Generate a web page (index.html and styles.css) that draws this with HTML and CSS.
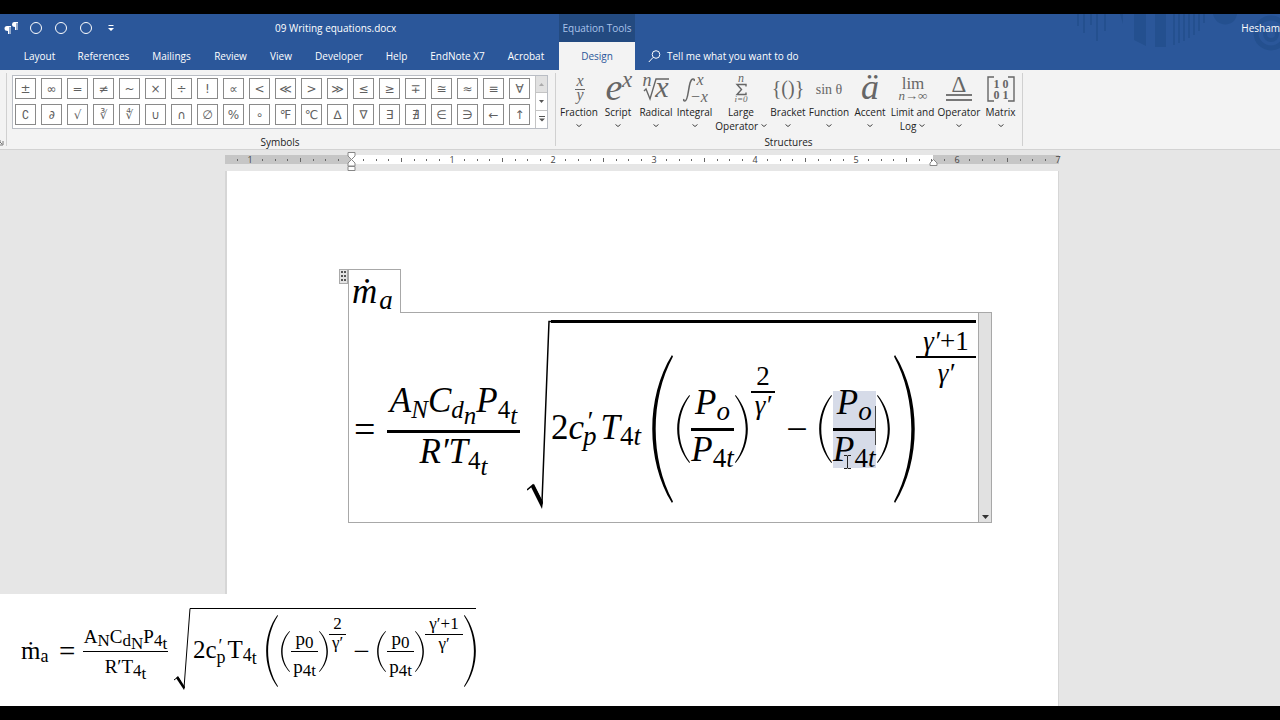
FILE: index.html
```html
<!DOCTYPE html>
<html lang="en">
<head>
<meta charset="utf-8">
<title>09 Writing equations.docx</title>
<link rel="stylesheet" href="styles.css">
</head>
<body>
<svg class="defs" aria-hidden="true">
  <symbol id="paren" viewBox="0 0 20 148" preserveAspectRatio="none"><path d="M19 0C-6 42-6 106 19 148L20 146.500C-2 104-2 44 20 1.500Z"/></symbol>
  <symbol id="chev" viewBox="0 0 6 4"><path d="M.500.500l2.500 2 2.500-2" fill="none" stroke="#444"/></symbol>
</svg>
<header class="app-head">
  <svg class="art" viewBox="0 0 204 56" aria-hidden="true">
    <g stroke="#24508f" fill="none">
      <path stroke-width="2" d="M2 0v12M8 0v19M15 0v11M21 0v27M29 0v17"/>
      <path stroke-width="2" d="M98 0v31M103 0v29M108 0v27M113 0v24M118 0v21M123 0v17M128 0v9"/>
      <circle cx="195" cy="19" r="15" stroke-width="5"/>
      <circle cx="195" cy="20" r="6" stroke-width="4"/>
    </g>
    <path fill="#24508f" d="M44 0h3v10zM58 0h12v32l-12-6zM79 0h11v33H79zM137 0h24c-2 14-21 14-24 0z"/>
  </svg>
  <div class="titlebar">
    <div class="quick">
      <button aria-label="Paragraph marks"><svg width="14" height="12" viewBox="0 0 14 12"><path fill="#fff" d="M3 4h4v1h-.500v7H5.500V5H5v7H4V9Q.500 9 .500 6.500T3 4zM10 0h4v1h-.500v7h-1V1H12v7h-1V5Q8 5 8 2.500T10 0z"/></svg></button>
      <button aria-label="Shape 1"><i class="ring"></i></button>
      <button aria-label="Shape 2"><i class="ring"></i></button>
      <button aria-label="Shape 3"><i class="ring"></i></button>
      <button aria-label="Customize"><svg width="6" height="7" viewBox="0 0 6 7"><path fill="#fff" d="M.5 0h5v1h-5zM0 3h6L3 6z"/></svg></button>
    </div>
    <h1>09 Writing equations.docx</h1>
    <div class="context">Equation Tools</div>
    <div class="user">Hesham</div>
  </div>
  <nav class="tabs">
    <button>Layout</button><button>References</button><button>Mailings</button><button>Review</button><button>View</button><button>Developer</button><button>Help</button><button>EndNote X7</button><button class="last">Acrobat</button><button class="active">Design</button>
    <button class="tell"><svg width="13" height="13" viewBox="0 0 13 13" fill="none" stroke="#fff"><circle cx="8" cy="4.500" r="3.800"/><path d="M5 7.500L.800 12"/></svg>Tell me what you want to do</button>
  </nav>
</header>
<section class="ribbon">
  <div class="edge"><svg width="4" height="6" viewBox="0 0 4 6"><path d="M0 1h1M3 1v4H0M0 2l2 2" fill="none" stroke="#777"/></svg></div>
  <div class="group symbols">
    <div class="gallery">
      <div class="cells">
        <button>±</button><button>∞</button><button>=</button><button>≠</button><button>~</button><button>×</button><button>÷</button><button>!</button><button>∝</button><button>&lt;</button><button>≪</button><button>&gt;</button><button>≫</button><button>≤</button><button>≥</button><button>∓</button><button>≅</button><button>≈</button><button>≡</button><button>∀</button>
        <button>∁</button><button>∂</button><button>√</button><button>∛</button><button>∜</button><button>∪</button><button>∩</button><button>∅</button><button>%</button><button>∘</button><button>℉</button><button>℃</button><button>∆</button><button>∇</button><button>∃</button><button>∄</button><button>∈</button><button>∋</button><button>←</button><button>↑</button>
      </div>
      <div class="spin">
        <button class="off" aria-label="Scroll up"><svg width="5" height="3"><path d="M0 3l2.500-3L5 3z" fill="#aaa"/></svg></button>
        <button aria-label="Scroll down"><svg width="5" height="3"><path d="M0 0l2.500 3L5 0z" fill="#555"/></svg></button>
        <button aria-label="More symbols"><svg width="6" height="6"><path d="M0 0h6v1H0zM0 2.500h6l-3 3z" fill="#555"/></svg></button>
      </div>
    </div>
    <h2>Symbols</h2>
  </div>
  <div class="group structures">
    <div class="tools">
      <button><svg class="ico" viewBox="0 0 28 28"><text class="it" x="15" y="10" font-size="16">x</text><path d="M10 13.500h10" stroke="#666"/><text class="it" x="15" y="24" font-size="16">y</text></svg><span>Fraction</span><svg class="chev"><use href="#chev"/></svg></button>
      <button><svg class="ico" viewBox="0 0 28 28"><text class="it" x="10" y="24" font-size="38">e</text><text class="it" x="23" y="11" font-size="23">x</text></svg><span>Script</span><svg class="chev"><use href="#chev"/></svg></button>
      <button><svg class="ico" viewBox="0 0 28 28"><text class="it" x="5" y="10" font-size="18">n</text><text class="it" x="20" y="21" font-size="30">x</text><path d="M2 15l2-2 4 10L14 3h13" fill="none" stroke="#666" stroke-width="1.400"/></svg><span>Radical</span><svg class="chev"><use href="#chev"/></svg></button>
      <button><svg class="ico" viewBox="0 0 28 28"><path d="M3 23q-1 2 1 2c4 0 3-22 8-22q2 0 1 2" fill="none" stroke="#666" stroke-width="1.500"/><text class="it" x="19" y="9" font-size="16">x</text><text class="it" x="18" y="26" font-size="16">−x</text></svg><span>Integral</span><svg class="chev"><use href="#chev"/></svg></button>
      <button><svg class="ico" viewBox="0 0 28 28"><text class="it" x="14" y="6" font-size="12">n</text><path d="M19 10.500V8.500H10l4.500 5L10 18.500h9v-2" fill="none" stroke="#666" stroke-width="1.400"/><text class="it" x="14" y="26" font-size="9">i=0</text></svg><span>Large<br>Operator <svg class="chev in"><use href="#chev"/></svg></span></button>
      <button><svg class="ico" viewBox="0 0 28 28"><text x="14" y="19" font-size="20">{()}</text></svg><span>Bracket</span><svg class="chev"><use href="#chev"/></svg></button>
      <button><svg class="ico" viewBox="0 0 28 28"><text x="14" y="18" font-size="14">sin θ</text></svg><span>Function</span><svg class="chev"><use href="#chev"/></svg></button>
      <button><svg class="ico" viewBox="0 0 28 28"><text class="it" x="14" y="23" font-size="36">ä</text></svg><span>Accent</span><svg class="chev"><use href="#chev"/></svg></button>
      <button><svg class="ico" viewBox="0 0 28 28"><text x="14" y="13" font-size="17">lim</text><text class="it" x="14" y="24" font-size="13">n→∞</text></svg><span>Limit and<br>Log <svg class="chev in"><use href="#chev"/></svg></span></button>
      <button><svg class="ico" viewBox="0 0 28 28"><text x="14" y="16" font-size="23">Δ</text><path d="M1 19h26M1 24h26" stroke="#777" stroke-width="2"/></svg><span>Operator</span><svg class="chev"><use href="#chev"/></svg></button>
      <button><svg class="ico" viewBox="0 0 28 28"><g font-weight="700"><text x="14" y="12" font-size="12">1 0</text><text x="14" y="23" font-size="12">0 1</text></g><path d="M7 1H1v24h6M21 1h6v24h-6" fill="none" stroke="#666" stroke-width="1.400"/></svg><span>Matrix</span><svg class="chev"><use href="#chev"/></svg></button>
    </div>
    <h2>Structures</h2>
  </div>
</section>
<main class="workspace">
  <svg class="ruler" width="834" height="18" viewBox="0 0 834 18">
    <defs>
      <pattern id="ticks" x="126" y="0" width="101" height="10" patternUnits="userSpaceOnUse"><path fill="#666" d="M12 4h1v2h-1zM25 4h1v2h-1zM37 4h1v2h-1zM50 3h1v4h-1zM63 4h1v2h-1zM75 4h1v2h-1zM88 4h1v2h-1z"/></pattern>
    </defs>
    <path fill="#c6c6c6" d="M0 0h834v9H0z"/><path fill="#fff" d="M126 0h582v9H126z"/>
    <path fill="url(#ticks)" d="M0 0h834v9H0z"/>
    <g class="nums"><text x="25" y="8">1</text><text x="227" y="8">1</text><text x="328" y="8">2</text><text x="429" y="8">3</text><text x="530" y="8">4</text><text x="631" y="8">5</text><text x="732" y="8">6</text><text x="833" y="8">7</text></g>
    <path fill="#fff" stroke="#888" d="M123-2.500h7V1l-3.500 3.500L123 1zM126.500 4.500L130 8v3h-7V8zM123 11.500h7v4h-7zM708.500 4.500L712 8v2.500h-7V8z"/>
  </svg>
  <article class="page">
    <div class="equation">
      <button class="handle" aria-label="Move equation"><svg width="5" height="11"><path fill="#555" d="M0 0h2v2H0zM3 0h2v2H3zM0 4h2v2H0zM3 4h2v2H3zM0 8h2v2H0zM3 8h2v2H3z"/></svg></button>
      <div class="lead math"><span>ṁ<sub>a</sub></span></div>
      <div class="body">
        <div class="math row">
          <div class="line">
            <span class="eq">=</span>
            <span class="frac wide"><span class="num"><span>A<sub>N</sub>C<sub>d<sub>n</sub></sub>P<sub class="up">4<sub>t</sub></sub></span></span><span class="den"><span>R′T<sub class="up">4<sub>t</sub></sub></span></span></span>
          </div>
          <svg class="rad" viewBox="0 0 24 189"><path d="M0 170l6-5 9 17L22 1.500h2" fill="none" stroke="#000" stroke-width="1.500"/><path d="M4 167l3-3 9 18-1 7z"/></svg>
          <div class="radicand">
            <div class="line">
              <span class="term"><b class="up">2</b>c<sup>′</sup><sub class="under">p</sub>T<sub class="up">4</sub><sub>t</sub></span>
              <svg class="paren tall"><use href="#paren"/></svg>
              <svg class="paren"><use href="#paren"/></svg>
              <span class="frac"><span class="num"><span>P<sub>o</sub></span></span><span class="den"><span>P<sub class="up">4</sub><sub>t</sub></span></span></span>
              <svg class="paren close"><use href="#paren"/></svg>
              <span class="frac exp"><span class="num up">2</span><span class="den">γ′</span></span>
              <span class="minus">−</span>
              <svg class="paren"><use href="#paren"/></svg>
              <span class="frac picked"><span class="num"><span>P<sub>o</sub></span></span><span class="den"><span>P<sub class="up">4</sub><sub>t</sub></span></span>
                <svg class="ibeam" width="7" height="14" viewBox="0 0 7 14"><path d="M0 .500h3l.500 1 .500-1h3M3.500 1v12M0 13.500h3l.500-1 .500 1h3" fill="none" stroke="#222"/></svg></span>
              <svg class="paren close"><use href="#paren"/></svg>
              <svg class="paren tall close"><use href="#paren"/></svg>
              <span class="frac exp top"><span class="num">γ′<b class="up">+1</b></span><span class="den">γ′</span></span>
            </div>
          </div>
        </div>
        <button class="drop" aria-label="Equation options"><svg width="7" height="4"><path d="M0 0h7L3.500 4z" fill="#333"/></svg></button>
      </div>
    </div>
  </article>
  <aside class="sample">
    <div class="math small row">
      <div class="line">
        <span class="mdot">ṁ<sub>a</sub></span>
        <span class="eq">=</span>
        <span class="frac wide"><span class="num"><span>A<sub>N</sub>C<sub>d<sub>N</sub></sub>P<sub>4<sub>t</sub></sub></span></span><span class="den"><span>R′T<sub>4<sub>t</sub></sub></span></span></span>
      </div>
      <svg class="rad" viewBox="0 0 18 82"><path d="M0 72l4-3 6 11L16 .500h2" fill="none" stroke="#000"/><path d="M2 70l2-2 7 11-1 3z"/></svg>
      <div class="radicand">
        <div class="line">
          <span class="term">2c<sup>′</sup><sub class="under">p</sub>T<sub>4<sub>t</sub></sub></span>
          <svg class="paren tall"><use href="#paren"/></svg>
          <svg class="paren"><use href="#paren"/></svg>
          <span class="frac"><span class="num"><span>p<sub>0</sub></span></span><span class="den"><span>p<sub>4t</sub></span></span></span>
          <svg class="paren close"><use href="#paren"/></svg>
          <span class="frac exp"><span class="num">2</span><span class="den">γ′</span></span>
          <span class="minus">−</span>
          <svg class="paren"><use href="#paren"/></svg>
          <span class="frac"><span class="num"><span>p<sub>0</sub></span></span><span class="den"><span>p<sub>4t</sub></span></span></span>
          <svg class="paren close"><use href="#paren"/></svg>
          <span class="frac exp top"><span class="num">γ′+1</span><span class="den">γ′</span></span>
          <svg class="paren tall close"><use href="#paren"/></svg>
        </div>
      </div>
    </div>
  </aside>
</main>
</body>
</html>
```
FILE: styles.css
```css
* { box-sizing: border-box; }
body {
  margin: 0;
  min-height: 100vh;
  display: flex;
  flex-direction: column;
  border-top: 14px solid #000;
  border-bottom: 14px solid #000;
  background: #e6e6e6;
  font: 10px/14px "Open Sans", "Noto Sans", sans-serif;
  color: #222;
  overflow-x: hidden;
}
button { font: inherit; color: inherit; background: none; border: 0; padding: 0; }
h1, h2 { margin: 0; font-size: 10px; font-weight: 400; }
.defs { position: absolute; width: 0; height: 0; }

/* Title bar and tabs */
.app-head { position: relative; background: #2b579a; color: #fff; }
.art { position: absolute; right: 0; top: 0; width: 204px; height: 56px; }
.titlebar { display: flex; height: 28px; align-items: center; position: relative; }
.quick { display: flex; align-items: center; width: 235px; }
.quick button { width: 25px; height: 20px; display: flex; align-items: center; justify-content: center; }
.quick button:first-child { width: 21px; margin-right: 2px; }
.ring { width: 12px; height: 12px; border: 1px solid #fff; border-radius: 50%; }
.titlebar h1 { width: 324px; padding-left: 40px; }
.context { width: 76px; height: 28px; line-height: 28px; background: #234a80; color: #a9c3ea; text-align: center; }
.user { margin-left: auto; }
.tabs { display: grid; grid-template-columns: 55px 73px 63px 55px 46px 70px 45px 77px 63px 76px auto; padding-left: 12px; height: 28px; position: relative; justify-content: start; }
.tabs .last { padding-right: 3px; }
.tabs .active { background: #f3f3f3; color: #2b579a; }
.tell { display: flex; align-items: center; gap: 6px; padding-left: 13px; }

/* Ribbon */
.ribbon { display: flex; height: 80px; background: #f3f3f3; border-bottom: 1px solid #d2d2d2; }
.edge { width: 7px; border-right: 1px solid #d0d0d0; margin: 3px 0; display: flex; align-items: flex-end; }
.group { display: flex; flex-direction: column; justify-content: space-between; border-right: 1px solid #d0d0d0; margin: 3px 0; }
.group h2 { text-align: center; line-height: 8px; }
.symbols { padding: 2px 7px 0 5px; }
.gallery { display: flex; border: 1px solid #b9bdc4; background: #fff; height: 54px; }
.cells { display: grid; grid-template-columns: repeat(20, 21px); grid-auto-rows: 21px; gap: 5px; padding: 2px 5px 2px 2px; }
.cells button { border: 1px solid #8a8a8a; color: #606060; font: 12px/18px "DejaVu Sans", sans-serif; overflow: hidden; }
.spin { display: grid; grid-template-rows: 1fr 1fr 1fr; width: 12px; border-left: 1px solid #c4c4c4; }
.spin button { display: flex; align-items: center; justify-content: center; border-bottom: 1px solid #c4c4c4; }
.spin button:last-child { border-bottom: 0; }
.spin .off { background: #e1e1e1; }
.structures { padding: 0 4px 0 3px; }
.tools { display: grid; grid-template-columns: 40px 38px 38px 39px 54px 40px 42px 40px 45px 48px 35px; height: 60px; }
.tools button { display: flex; flex-direction: column; align-items: center; white-space: nowrap; }
.ico { width: 28px; height: 28px; margin: 3px 0 1px; overflow: visible; fill: #666; flex: none; }
.ico text { font-family: "Liberation Serif", serif; text-anchor: middle; }
.ico .it { font-style: italic; }
.chev { width: 6px; height: 4px; margin-top: 5px; flex: none; }
.chev.in { margin: 0 0 2px; }

/* Document area */
.workspace { flex: 1; position: relative; display: flex; flex-direction: column; align-items: center; padding: 5px 0 0 4px; }
.ruler { overflow: visible; margin-bottom: -2px; flex: none; }
.nums { font: 9px "Open Sans", sans-serif; fill: #444; text-anchor: middle; }
.page { width: 834px; flex: 1; background: #fff; border: solid #d6d6d6; border-width: 0 1px 0 2px; padding: 98px 67px 0 121px; }
.equation { position: relative; }
.handle { position: absolute; right: 100%; top: 0; width: 9px; height: 15px; background: #e4e4e4; border: 1px solid #aaa; display: flex; align-items: center; justify-content: center; }
.lead { position: relative; z-index: 1; width: 53px; height: 44px; margin-bottom: -1px; background: #fff; border: 1px solid #a8a8a8; border-bottom: 0; padding: 3px 0 0 3px; }
.body { display: flex; justify-content: space-between; width: 644px; border: 1px solid #a8a8a8; }
.drop { width: 13px; background: #e1e1e1; border-left: 1px solid #a8a8a8; display: flex; align-items: flex-end; justify-content: center; padding-bottom: 3px; }

/* Math layout: every line is centred on the fraction bar */
.math {
  --line: 148px;
  --sub: 27px;
  --bar: 3px;
  font: italic 35px/37px "Liberation Serif", serif;
  color: #000;
  white-space: nowrap;
}
.row { display: flex; align-items: flex-start; padding: 7px 0 13px 5px; }
.line { display: flex; align-items: center; height: var(--line); margin: 35px 0 3px; }
.radicand { border-top: 3px solid #000; }
.radicand .line { margin: 32px 0 6px; }
.rad { width: 24px; height: 189px; margin-left: 7px; flex: none; }
.math sub, .math sup { font-size: var(--sub); line-height: 0; vertical-align: -6px; }
.lead sub { margin-left: 2px; }
.math sup { vertical-align: 9px; margin-left: 2px; }
.math .under { margin: 0 4px 0 -9px; }
.math b { font-weight: 400; }
.up { font-style: normal; }
.up sub { font-style: italic; }
.eq { width: 33px; font-style: normal; font-size: 38px; }
.term { width: 98px; padding-bottom: 4px; }
.frac { display: grid; width: 43px; position: relative; }
.frac > span { display: flex; justify-content: center; }
.frac .num { line-height: 23px; padding-bottom: 14px; border-bottom: var(--bar) solid #000; }
.frac .den { height: 37px; }
.frac.wide { width: 133px; --sub: 25px; }
.frac.exp { --bar: 2px; width: 24px; font-size: 27px; align-self: flex-start; margin: 12px 0 0 3px; }
.frac.exp .num { line-height: 18px; padding-bottom: 6px; }
.frac.exp .den { line-height: 24px; height: 24px; }
.frac.exp.top { width: 60px; margin: -23px 0 0 1px; }
.frac.exp.top .den { line-height: 30px; }
.minus { width: 44px; text-align: center; font-style: normal; font-size: 38px; }
.paren { width: 13px; height: 68px; flex: none; margin: 0 1px 0 0; }
.paren.close { transform: scaleX(-1); margin: 0 0 0 1px; }
.paren.tall { width: 21px; height: 148px; margin: 0 4px 0 3px; }
.paren.tall.close { margin: 0 0 0 4px; }
.picked { background: #d6dbe8; border-right: 1px solid #444; border-image: linear-gradient(#0000 20%, #444 20% 70%, #0000 70%) 1; }
.frac .ibeam { position: absolute; left: 11px; bottom: -1px; }

/* Typeset sample in the corner */
.sample { position: absolute; left: 0; bottom: 0; width: 480px; height: 112px; background: #fff; }
.small { --line: 72px; --sub: 18px; --bar: 1px; font: 25px/26px "Liberation Serif", serif; }
.small.row { padding: 14px 0 0 21px; }
.small .line { margin: 7px 0 0; }
.small .radicand { border-top-width: 1px; }
.small .radicand .line { margin-top: 6px; }
.small .rad { width: 18px; height: 82px; margin-left: 6px; }
.small sub { vertical-align: -3px; }
.small .mdot { width: 38px; }
.small .eq { width: 24px; font-size: 29px; }
.small sup { vertical-align: 6px; }
.small .under { margin: 0 2px 0 -6px; vertical-align: -5px; }
.small .term { width: 73px; padding: 0 0 2px 1px; }
.small .frac { width: 27px; font-size: 19px; --sub: 17px; }
.small .frac.wide { width: 85px; }
.small .frac .num { line-height: 20px; padding-bottom: 2px; }
.small .frac.wide .num { line-height: 16px; padding-bottom: 6px; }
.small .frac .den { line-height: 30px; height: 22px; }
.small .frac.exp { --bar: 1px; font-size: 17px; width: 17px; margin: 3px 0 0 1px; }
.small .frac.exp .num { line-height: 12px; padding-bottom: 4px; }
.small .frac.exp .den { line-height: 16px; height: 16px; }
.small .frac.exp.top { width: 38px; margin-right: 1px; }
.small .frac.exp.top .den { line-height: 18px; }
.small .minus { width: 31px; font-size: 29px; }
.small .paren { width: 9px; height: 41px; }
.small .paren.tall { width: 12px; height: 72px; margin: 0 3px 0 1px; }
.small .paren.tall.close { margin: 0; }
```
